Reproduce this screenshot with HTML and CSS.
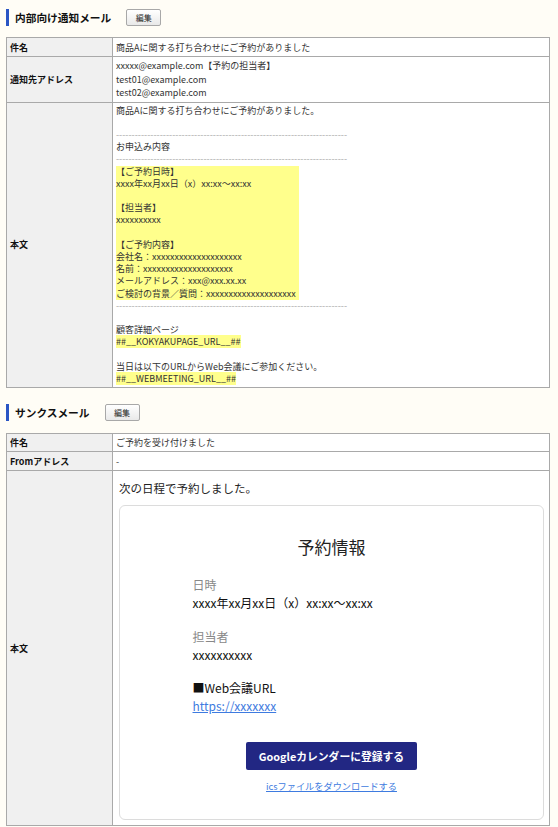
FILE: index.html
```html
<!DOCTYPE html>
<html lang="ja">
<head>
<meta charset="utf-8">
<title>メール設定</title>
<link rel="stylesheet" href="styles.css">
</head>
<body>
<div class="page">
  <div class="section-head first">
    <h2 class="title">内部向け通知メール</h2>
    <button class="edit-btn">編集</button>
  </div>
  <table class="info">
    <tr class="r1">
      <th>件名</th>
      <td>商品Aに関する打ち合わせにご予約がありました</td>
    </tr>
    <tr class="r2">
      <th>通知先アドレス</th>
      <td class="addr">
        <div>xxxxx@example.com【予約の担当者】</div>
        <div>test01@example.com</div>
        <div>test02@example.com</div>
      </td>
    </tr>
    <tr>
      <th>本文</th>
      <td class="body-cell">
        <div class="line">商品Aに関する打ち合わせにご予約がありました。</div>
        <div class="line">&nbsp;</div>
        <div class="line"><span class="dash">--------------------------------------------------------------------------</span></div>
        <div class="line">お申込み内容</div>
        <div class="line"><span class="dash">--------------------------------------------------------------------------</span></div>
        <div class="hl-block">
          <div class="line">【ご予約日時】</div>
          <div class="line">xxxx年xx月xx日（x）xx:xx～xx:xx</div>
          <div class="line">&nbsp;</div>
          <div class="line">【担当者】</div>
          <div class="line">xxxxxxxxxx</div>
          <div class="line">&nbsp;</div>
          <div class="line">【ご予約内容】</div>
          <div class="line">会社名：xxxxxxxxxxxxxxxxxxxx</div>
          <div class="line">名前：xxxxxxxxxxxxxxxxxxxx</div>
          <div class="line">メールアドレス：xxx@xxx.xx.xx</div>
          <div class="line">ご検討の背景／質問：xxxxxxxxxxxxxxxxxxxx</div>
        </div>
        <div class="line"><span class="dash">--------------------------------------------------------------------------</span></div>
        <div class="line">&nbsp;</div>
        <div class="line">顧客詳細ページ</div>
        <div class="line"><span class="hl">##__KOKYAKUPAGE_URL__##</span></div>
        <div class="line">&nbsp;</div>
        <div class="line">当日は以下のURLからWeb会議にご参加ください。</div>
        <div class="line"><span class="hl">##__WEBMEETING_URL__##</span></div>
      </td>
    </tr>
  </table>

  <div class="section-head second">
    <h2 class="title">サンクスメール</h2>
    <button class="edit-btn">編集</button>
  </div>
  <table class="info">
    <tr class="r1b">
      <th>件名</th>
      <td>ご予約を受け付けました</td>
    </tr>
    <tr class="r2b">
      <th>Fromアドレス</th>
      <td>-</td>
    </tr>
    <tr>
      <th>本文</th>
      <td class="mail-cell">
        <p class="intro">次の日程で予約しました。</p>
        <div class="card">
          <h3 class="card-title">予約情報</h3>
          <div class="card-content">
            <div class="item">
              <div class="item-label">日時</div>
              <div class="item-value">xxxx年xx月xx日（x）xx:xx〜xx:xx</div>
            </div>
            <div class="item">
              <div class="item-label">担当者</div>
              <div class="item-value">xxxxxxxxxx</div>
            </div>
            <div class="item">
              <div class="item-value">■Web会議URL</div>
              <div class="item-value"><a class="link" href="#">https://xxxxxxx</a></div>
            </div>
          </div>
          <div class="actions">
            <a class="gcal-btn" href="#">Googleカレンダーに登録する</a>
            <a class="ics-link" href="#">icsファイルをダウンロードする</a>
          </div>
        </div>
      </td>
    </tr>
  </table>
</div>
</body>
</html>
```

FILE: styles.css
```css
html, body {
  margin: 0;
  padding: 0;
  background: #fffdf6;
}
body {
  font-family: "Noto Sans CJK JP", "Noto Sans", sans-serif;
  color: #333;
}
.page {
  padding: 0 6px;
  width: 544px;
}
.section-head {
  display: flex;
  align-items: center;
  height: 17px;
}
.section-head.first {
  margin-top: 9px;
  margin-bottom: 11px;
}
.section-head.second {
  margin-top: 16px;
  margin-bottom: 12px;
}
.title {
  margin: 0;
  height: 17px;
  line-height: 17px;
  border-left: 3px solid #2a55c4;
  padding-left: 6px;
  font-size: 10.7px;
  font-weight: bold;
  color: #111;
}
.edit-btn {
  margin-left: 15px;
  width: 35px;
  height: 17px;
  padding: 0;
  border: 1px solid #a8a8a8;
  border-radius: 2px;
  background: linear-gradient(#ffffff, #e9e9e9);
  font-family: "Noto Sans CJK JP", sans-serif;
  font-size: 8px;
  line-height: 15px;
  color: #222;
}
.info {
  width: 544px;
  border-collapse: collapse;
  background: #fff;
  font-size: 9px;
}
.info th, .info td {
  border: 1px solid #a9a9a9;
  padding: 2px 3px;
  vertical-align: middle;
}
.info th {
  width: 99px;
  background: #f0f0f0;
  text-align: left;
  font-weight: bold;
  color: #111;
}
.info td {
  color: #333;
  line-height: 13px;
}
.r1 th, .r1 td { height: 14px; }
.r1b th, .r1b td { height: 13px; }
.r2b th, .r2b td { height: 14px; }
.addr div {
  line-height: 13.5px;
}
.body-cell {
  padding-top: 2px;
  padding-bottom: 3px;
}
.line {
  line-height: 12.2px;
  white-space: nowrap;
}
.dash {
  color: #aaa;
}
.hl-block {
  display: inline-block;
  background: #ffff8c;
  padding-right: 3px;
}
.hl {
  background: #ffff8c;
}
.info td.mail-cell {
  vertical-align: top;
  padding: 8px 5px 5px 6px;
}
.intro {
  margin: 0 0 8px;
  font-size: 11.5px;
  line-height: 18px;
  color: #222;
}
.card {
  border: 1px solid #dcdcdc;
  border-radius: 6px;
  padding: 29px 0 26px;
  color: #222;
}
.card-title {
  margin: 0 0 16px;
  text-align: center;
  font-size: 17px;
  font-weight: normal;
  line-height: 24px;
}
.card-content {
  width: 278px;
  margin: 0 auto;
  display: flex;
  flex-direction: column;
  gap: 15px;
}
.item-label {
  font-size: 12px;
  line-height: 19px;
  color: #888;
}
.item-value {
  font-size: 12px;
  line-height: 18px;
  color: #111;
}
.link {
  color: #3e7be0;
  text-decoration: underline;
}
.actions {
  margin-top: 27px;
  display: flex;
  flex-direction: column;
  align-items: center;
  gap: 9px;
}
.gcal-btn {
  display: block;
  width: 171px;
  height: 28px;
  line-height: 28px;
  text-align: center;
  background: #222783;
  color: #fff;
  border-radius: 2px;
  font-size: 10.8px;
  font-weight: bold;
  text-decoration: none;
}
.ics-link {
  font-size: 9.2px;
  line-height: 14px;
  color: #3e7be0;
  text-decoration: underline;
}
```
